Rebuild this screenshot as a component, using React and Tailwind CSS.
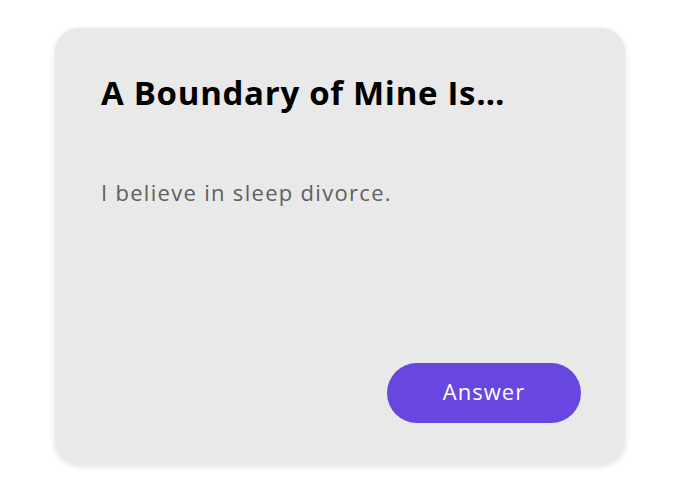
import React from 'react';

const App = () => {
  return (
    <div className="w-[680px] h-[492px] bg-white flex items-center justify-center" style={{ fontFamily: '"Open Sans", "Liberation Sans", sans-serif' }}>
      <div className="w-[570px] h-[436px] bg-[#e9e9e9] rounded-[24px] shadow-[0_2px_6px_rgba(0,0,0,0.12)] pl-[46px] pr-[44px] pt-[45px] pb-[41px] flex flex-col">
        <h1 className="text-[33px] leading-[40px] font-bold text-black tracking-[0.7px]">A Boundary of Mine Is…</h1>
        <p className="mt-[65px] text-[22px] leading-[28px] text-[#5f5f5f] tracking-[1.3px]">I believe in sleep divorce.</p>
        <div className="mt-auto flex justify-end">
          <button className="w-[194px] h-[60px] pb-[4px] rounded-full bg-[#6846e0] text-white text-[22px] font-medium tracking-[1px]">Answer</button>
        </div>
      </div>
    </div>
  );
};

export default App;
